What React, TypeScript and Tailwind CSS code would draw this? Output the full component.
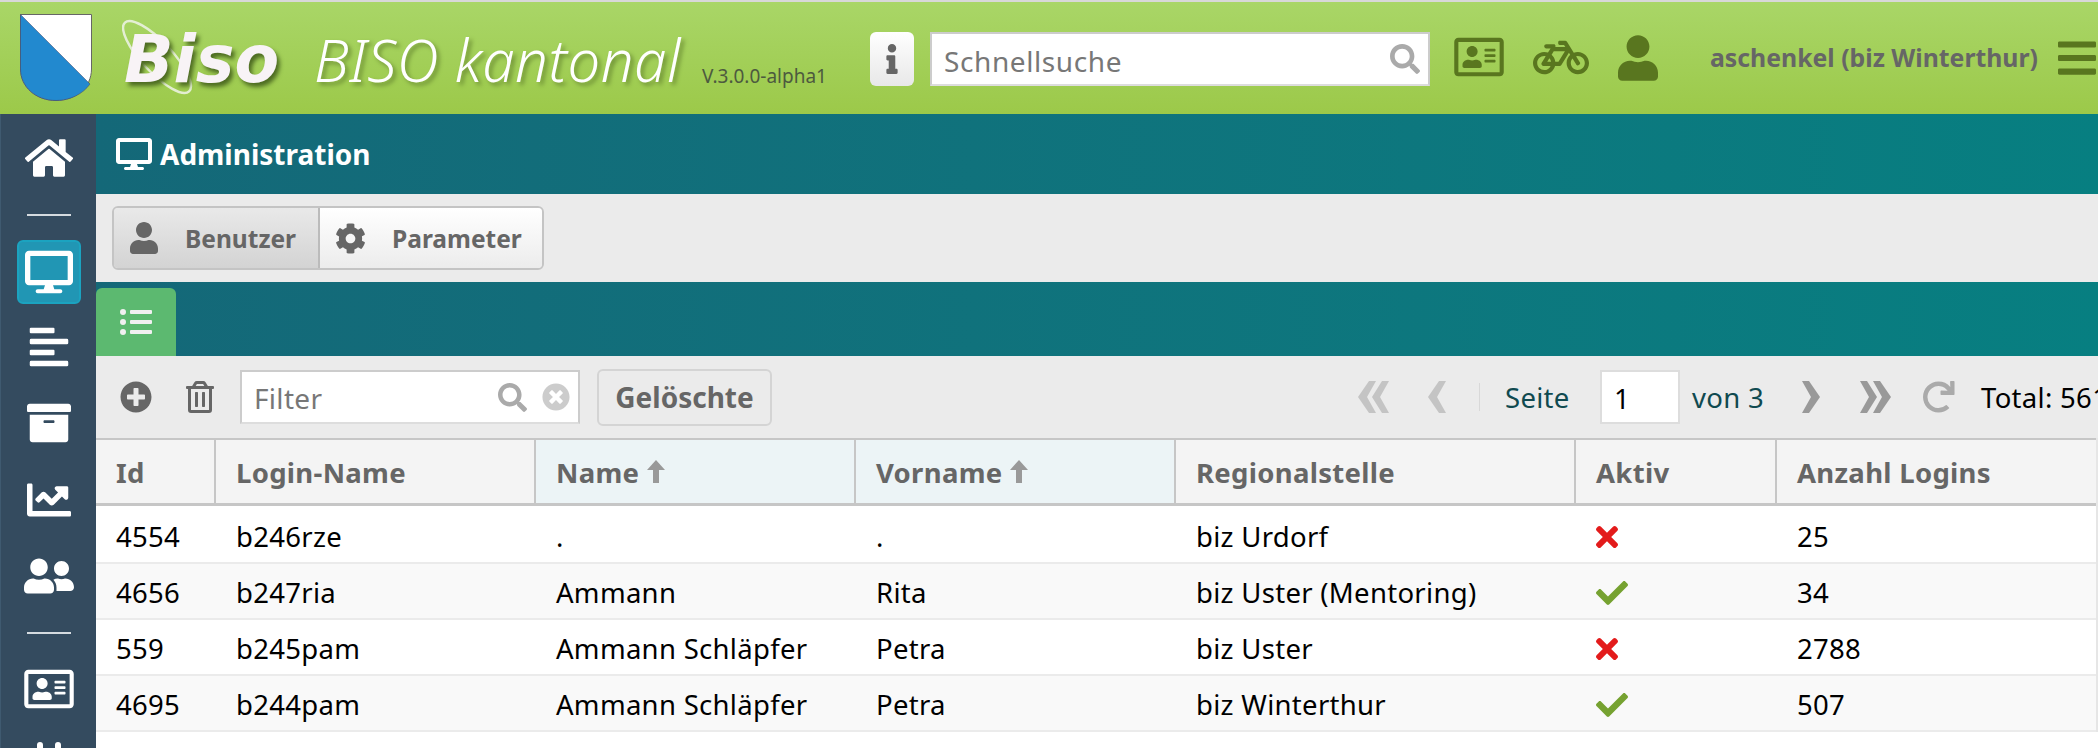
import {
  FaAlignLeft,
  FaArchive,
  FaBars,
  FaBicycle,
  FaChartLine,
  FaCheck,
  FaCog,
  FaDesktop,
  FaHome,
  FaInfo,
  FaListUl,
  FaPlug,
  FaPlusCircle,
  FaRedo,
  FaRegAddressCard,
  FaRegTrashAlt,
  FaSearch,
  FaTimes,
  FaTimesCircle,
  FaUser,
  FaUserFriends,
} from "react-icons/fa";

const gridCols = "grid grid-cols-[120px_320px_320px_320px_400px_201px_317px]";

const rows = [
  { id: "4554", login: "b246rze", name: ".", vorname: ".", stelle: "biz Urdorf", aktiv: false, logins: "25" },
  { id: "4656", login: "b247ria", name: "Ammann", vorname: "Rita", stelle: "biz Uster (Mentoring)", aktiv: true, logins: "34" },
  { id: "559", login: "b245pam", name: "Ammann Schläpfer", vorname: "Petra", stelle: "biz Uster", aktiv: false, logins: "2788" },
  { id: "4695", login: "b244pam", name: "Ammann Schläpfer", vorname: "Petra", stelle: "biz Winterthur", aktiv: true, logins: "507" },
];

export default function App() {
  return (
    <div className="h-[748px] w-[2098px] overflow-hidden bg-white font-['Noto_Sans',sans-serif] text-[27.5px] tracking-[0.3px] text-black">
      <TopBar />
      <div className="flex h-[634px]">
        <Sidebar />
        <main className="min-w-0 flex-1">
          <div className="flex h-[80px] items-center bg-linear-to-r from-[#146878] to-[#077f81] pl-[20px] text-white">
            <FaDesktop className="h-[32px] w-[36px]" />
            <h1 className="ml-[8px] text-[28px] leading-none font-bold tracking-normal">Administration</h1>
          </div>
          <div className="flex h-[88px] items-center bg-[#ebebeb] pl-[16px]">
            <div className="flex h-[64px] w-[432px] rounded-[6px] border-2 border-[#c4c4c4] text-[24.5px] font-bold tracking-normal text-[#666]">
              <button type="button" className="flex w-[206px] items-center rounded-l-[4px] border-r-2 border-[#bbb] bg-linear-to-b from-[#e9e9e9] to-[#d3d3d3] pl-[16px]">
                <FaUser className="h-[32px] w-[28px]" />
                <span className="ml-[27px] pt-[2px]">Benutzer</span>
              </button>
              <button type="button" className="flex flex-1 items-center rounded-r-[4px] bg-linear-to-b from-white to-[#ececec] pl-[15px]">
                <FaCog className="h-[31px] w-[31px]" />
                <span className="ml-[26px] pt-[2px]">Parameter</span>
              </button>
            </div>
          </div>
          <div className="flex h-[74px] items-end bg-linear-to-r from-[#146878] to-[#077f81]">
            <div className="flex h-[68px] w-[80px] items-center justify-center rounded-t-[6px] bg-[#5cb970] text-[#f0f0f0]">
              <FaListUl className="h-[32px] w-[32px]" />
            </div>
          </div>
          <Toolbar />
          <div className="border-r-2 border-[#e6e6e6]">
            <div className={`${gridCols} h-[68px] border-t-2 border-b-[3px] border-[#c6c6c6] bg-[#f4f4f4] text-[27.5px] font-bold text-[#666]`}>
              <HeadCell>Id</HeadCell>
              <HeadCell>Login-Name</HeadCell>
              <HeadCell sorted>Name</HeadCell>
              <HeadCell sorted>Vorname</HeadCell>
              <HeadCell>Regionalstelle</HeadCell>
              <HeadCell>Aktiv</HeadCell>
              <HeadCell last>Anzahl Logins</HeadCell>
            </div>
            {rows.map((row, index) => (
              <div key={row.id} className={`${gridCols} items-center border-b-2 border-[#ebebeb] ${index === 0 ? "h-[58px] pt-[5px]" : "h-[56px] pt-[4px]"} ${index % 2 === 1 ? "bg-[#f9f9f9]" : "bg-white"}`}>
                <span className="pl-[20px]">{row.id}</span>
                <span className="pl-[20px]">{row.login}</span>
                <span className="pl-[20px]">{row.name}</span>
                <span className="pl-[20px]">{row.vorname}</span>
                <span className="pl-[20px]">{row.stelle}</span>
                <span className="pl-[20px]">
                  {row.aktiv ? (
                    <FaCheck className="h-[32px] w-[32px] text-[#76a231]" />
                  ) : (
                    <FaTimes className="h-[32px] w-[22px] text-[#e31b1b]" />
                  )}
                </span>
                <span className="pl-[20px]">{row.logins}</span>
              </div>
            ))}
          </div>
        </main>
      </div>
    </div>
  );
}

function TopBar() {
  return (
    <header className="flex h-[114px] items-start border-t-2 border-[#d8d8d8] bg-linear-to-b from-[#a9d667] to-[#9cc949]">
      <svg viewBox="0 0 72 87" className="mt-[12px] ml-[20px] h-[87px] w-[72px] shrink-0">
        <path d="M0.5 0.5H71.5V55C71.5 73 56 86.5 36 86.5S0.5 73 0.5 55Z" fill="#fff" stroke="#666" />
        <path d="M0.5 0.5L70 70C63 80 50 86.5 36 86.5C16 86.5 0.5 73 0.5 55Z" fill="#2289cf" stroke="#446" strokeWidth="0.5" />
      </svg>
      <div className="relative ml-[30px] h-[112px] w-[170px] shrink-0">
        <svg viewBox="0 0 80 90" className="absolute top-[16px] left-0 h-[90px] w-[80px]" fill="none">
          <ellipse cx="35" cy="39" rx="47" ry="15" transform="rotate(47 35 39)" stroke="#eef3e8" strokeWidth="2.5" opacity="0.85" />
        </svg>
        <span className="absolute top-[25px] left-[2px] font-['DejaVu_Sans',sans-serif] text-[65px] leading-none font-bold tracking-normal text-[#f8f3f6] italic [text-shadow:3px_4px_4px_#4d6b22]">
          Biso
        </span>
      </div>
      <span className="mt-[29px] ml-[22px] w-[372px] shrink-0 text-[58px] leading-none font-light tracking-[0.5px] whitespace-nowrap text-white italic [text-shadow:3px_3px_4px_#6d8f35]">
        BISO kantonal
      </span>
      <span className="mt-[65px] ml-[16px] w-[124px] shrink-0 text-[19px] leading-none tracking-normal whitespace-nowrap text-[#4d5a3f]">V.3.0.0-alpha1</span>
      <button type="button" className="mt-[30px] ml-[44px] flex h-[54px] w-[44px] shrink-0 items-center justify-center rounded-[6px] bg-linear-to-b from-white to-[#e8e8e8] text-[#666]">
        <FaInfo className="h-[30px] w-[24px]" />
      </button>
      <div className="mt-[30px] ml-[16px] flex h-[54px] w-[500px] shrink-0 items-center border-2 border-[#ccc] border-b-[#ddd] bg-white pr-[8px] pl-[12px]">
        <input readOnly placeholder="Schnellsuche" className="min-w-0 flex-1 pt-[3px] text-[28px] tracking-[0.6px] outline-none placeholder:text-[#777]" />
        <FaSearch className="h-[30px] w-[30px] text-[#aaa]" />
      </div>
      <FaRegAddressCard className="mt-[33px] ml-[24px] h-[44px] w-[50px] shrink-0 text-[#59761f]" />
      <FaBicycle className="mt-[33px] ml-[29px] h-[45px] w-[56px] shrink-0 text-[#59761f]" />
      <FaUser className="mt-[33px] ml-[29px] h-[46px] w-[40px] shrink-0 text-[#59761f]" />
      <span className="mt-[43px] ml-[52px] w-[326px] shrink-0 text-[24.8px] leading-none font-bold tracking-normal whitespace-nowrap text-[#666]">aschenkel (biz Winterthur)</span>
      <FaBars className="mt-[33px] ml-[22px] h-[46px] w-[38px] shrink-0 text-[#59761f]" />
    </header>
  );
}

function Sidebar() {
  return (
    <nav className="flex w-[96px] shrink-0 flex-col items-center overflow-hidden border-l border-[#3f5a70] bg-[#344b5f] text-white">
      <FaHome className="mt-[22px] h-[44px] w-[48px] shrink-0" />
      <div className="mt-[34px] h-[2px] w-[44px] shrink-0 bg-[#d5dbe0]" />
      <div className="mt-[24px] flex h-[64px] w-[64px] shrink-0 items-center justify-center rounded-[6px] border-2 border-[#1ba3c0] bg-[#2196b4]">
        <FaDesktop className="h-[44px] w-[48px]" />
      </div>
      <FaAlignLeft className="mt-[21px] h-[44px] w-[40px] shrink-0" />
      <FaArchive className="mt-[32px] h-[44px] w-[44px] shrink-0" />
      <FaChartLine className="mt-[33px] h-[44px] w-[44px] shrink-0" />
      <FaUserFriends className="mt-[34px] h-[40px] w-[50px] shrink-0" />
      <div className="mt-[36px] h-[2px] w-[44px] shrink-0 bg-[#d5dbe0]" />
      <FaRegAddressCard className="mt-[33px] h-[44px] w-[50px] shrink-0" />
      <FaPlug className="mt-[31px] h-[48px] w-[36px] shrink-0" />
    </nav>
  );
}

function Toolbar() {
  return (
    <div className="flex h-[82px] items-center overflow-hidden bg-[#ebebeb] whitespace-nowrap">
      <FaPlusCircle className="ml-[24px] h-[32px] w-[32px] shrink-0 text-[#666]" />
      <FaRegTrashAlt className="ml-[34px] h-[32px] w-[28px] shrink-0 text-[#666]" />
      <div className="ml-[26px] flex h-[54px] w-[340px] shrink-0 items-center border-2 border-[#ccc] border-b-[#ddd] bg-white pr-[8px] pl-[12px]">
        <input readOnly placeholder="Filter" className="min-w-0 flex-1 pt-[2px] text-[28px] outline-none placeholder:text-[#777]" />
        <FaSearch className="h-[29px] w-[29px] text-[#aaa]" />
        <FaTimesCircle className="ml-[15px] h-[28px] w-[28px] text-[#ccc]" />
      </div>
      <button type="button" className="ml-[17px] h-[57px] w-[175px] shrink-0 rounded-[6px] border-2 border-[#d4d4d4] text-[28px] font-bold tracking-normal text-[#666]">
        Gelöschte
      </button>
      <DoubleChevron className="ml-[585px] rotate-180 text-[#c4c4c4]" />
      <Chevron className="ml-[37px] rotate-180 text-[#c4c4c4]" />
      <div className="ml-[32px] h-[28px] w-px shrink-0 bg-[#d8d8d8]" />
      <span className="ml-[25px] w-[66px] shrink-0 pt-[2px] text-[#104a50]">Seite</span>
      <input readOnly value="1" className="ml-[29px] h-[54px] w-[80px] shrink-0 border-2 border-[#ddd] bg-white pt-[2px] pl-[12px] text-[27.5px] outline-none" />
      <span className="ml-[12px] w-[72px] shrink-0 pt-[2px] text-[#104a50]">von 3</span>
      <Chevron className="ml-[37px] text-[#999]" />
      <DoubleChevron className="ml-[38px] text-[#999]" />
      <FaRedo className="ml-[30px] h-[32px] w-[33px] shrink-0 text-[#aaa]" />
      <span className="ml-[26px] pt-[2px]">Total: 561</span>
    </div>
  );
}

function Chevron({ className }: { className: string }) {
  return (
    <svg viewBox="0 0 20 32" fill="currentColor" className={`h-[32px] w-[20px] shrink-0 ${className}`}>
      <path d="M1 0H8L19 16L8 32H1L10 16Z" />
    </svg>
  );
}

function DoubleChevron({ className }: { className: string }) {
  return (
    <svg viewBox="0 0 33 32" fill="currentColor" className={`h-[32px] w-[33px] shrink-0 ${className}`}>
      <path d="M1 0H8L18 16L8 32H1L10 16Z" />
      <path d="M14 0H21L32 16L21 32H14L23 16Z" />
    </svg>
  );
}

function HeadCell({ children, sorted, last }: { children: string; sorted?: boolean; last?: boolean }) {
  return (
    <div className={`flex items-center pt-[3px] pl-[20px] ${last ? "" : "border-r-2 border-[#c6c6c6]"} ${sorted ? "bg-[#ecf4f6]" : ""}`}>
      {children}
      {sorted && (
        <svg viewBox="0 0 20 23" fill="currentColor" className="mb-[4px] ml-[7px] h-[23px] w-[20px] text-[#999]">
          <path d="M10 0L19 10H13V23H7V10H1Z" />
        </svg>
      )}
    </div>
  );
}
